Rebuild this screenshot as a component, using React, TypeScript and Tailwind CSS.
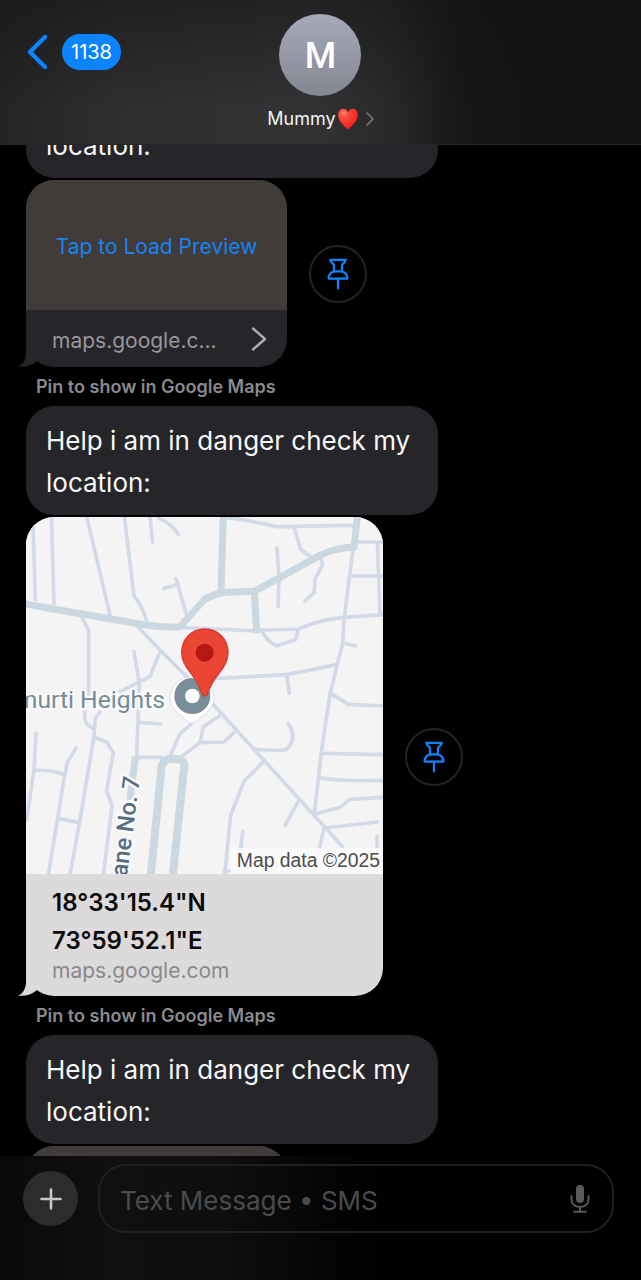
import { useLayoutEffect, useRef } from "react";

function TextBubble({ children }: { children: string }) {
  return (
    <p className="w-[412px] max-w-full rounded-[28px] bg-[#262529] pt-[14px] pr-4 pb-[11px] pl-5 text-[26px] leading-[42px] text-[#f7f7f8]">
      {children}
    </p>
  );
}

function Tail({ className }: { className: string }) {
  return (
    <svg className={`absolute bottom-0 -left-2 h-7 w-8 ${className}`} viewBox="0 0 32 28" fill="currentColor" aria-hidden="true">
      <path d="M8 0V14C8 20 5 26 0 27.700C7 28.500 14 26.500 19 22L24 18V0Z" />
    </svg>
  );
}

function PinButton() {
  return (
    <button type="button" aria-label="Pin" className="flex size-[58px] shrink-0 items-center justify-center rounded-full border-2 border-[#232325] text-[#1283fa]">
      <svg className="h-8 w-6" viewBox="0 0 24 32" fill="none" stroke="currentColor" strokeWidth="2.2" strokeLinecap="round" strokeLinejoin="round">
        <path d="M4.200 1.800H19.800C19.400 4.400 16.600 5.600 16 7V13.400C19.600 14.400 21.400 17 21.400 20.600H2.600C2.600 17 4.400 14.400 8 13.400V7C7.400 5.600 4.600 4.400 4.200 1.800Z" />
        <path d="M8 13.400H16M12 20.600V30.400" />
      </svg>
    </button>
  );
}

function LoadPreviewCard() {
  return (
    <div className="flex items-center gap-[22px]">
      <div className="relative w-[261px]">
        <Tail className="text-[#262529]" />
        <div className="relative overflow-hidden rounded-[28px] bg-[#262529]">
          <button type="button" className="flex h-[130px] w-full items-center justify-center bg-[#413c39] pt-1 text-[21px] text-[#1683f3]">
            Tap to Load Preview
          </button>
          <a href="#maps" className="flex h-[57px] items-center justify-between pr-5 pl-[26px] text-[21px] text-[#98979c]">
            <span className="pt-1">maps.google.c...</span>
            <svg className="h-6 w-4" viewBox="0 0 16 24" fill="none" stroke="#adadb1" strokeWidth="2.4" strokeLinecap="round" strokeLinejoin="round" aria-hidden="true">
              <path d="M2 1.500L14 12L2 22.500" />
            </svg>
          </a>
        </div>
      </div>
      <PinButton />
    </div>
  );
}

function MapDrawing() {
  return (
    <svg className="block w-full" viewBox="18 21 1071 1071" role="img" aria-label="Map">
      <rect x="18" y="21" width="1071" height="1071" fill="#f5f4f5" />
      <g fill="none" stroke="#d2dae7" strokeWidth="11" strokeLinecap="round" strokeLinejoin="round">
        <path d="M38 10L46 268M94 10L102 282M200 20L270 315M313 20L342 258C360 280 374 306 380 335M390 20L398 96M415 24Q458 42 475 74M432 235L470 224M468 206L500 315" />
        <path d="M615 22C690 30 740 44 772 50L1000 46M822 50L842 118L874 142M771 114L777 202L774 290M904 150L908 164L886 205L882 248L855 273M1005 96H1089M1072 96L1080 315M990 198H1089" />
        <path d="M1000 110L972 330L968 400L950 470L928 565L905 720L883 910M490 353L690 362L835 357Q900 328 972 322L1089 314" />
        <path d="M725 360Q740 395 770 407L826 390L835 360M972 400L1006 408M580 506L800 494L950 464M800 496L808 550" />
        <path d="M186 322L206 360V560M355 352L420 420L540 540L968 1010M420 424L390 500L300 545M342 424L358 520L350 740" />
        <path d="M928 548L985 583L1089 588M904 730L1089 734M898 803C950 812 1000 812 1089 812M1089 862L990 868L960 892L893 910L883 918M912 954L1072 936M912 954L895 1030M1071 978V1012" />
        <path d="M240 606L226 625L222 680L180 930L150 1095M196 590C190 630 195 645 218 654M226 683L260 696L280 728L260 842L276 888L262 1000L250 1095" />
        <path d="M168 714L142 756L133 800L112 930L85 1095M48 670L42 780L20 930M42 780L95 783L133 793M116 926L178 938" />
        <path d="M355 637L422 642M350 742H425M515 640L478 674L450 740M485 740L540 698L612 696L645 664M540 698L550 650L598 618" />
        <path d="M804 640Q834 684 800 718C770 724 740 720 702 718M727 758L672 814L632 915L614 1095M836 872L796 945M668 964L662 1020M614 1083H635" />
      </g>
      <g fill="none" stroke="#ccd8df" strokeWidth="21" strokeLinejoin="round">
        <path d="M8 280L100 297L360 342Q430 354 480 350L555 267Q590 250 620 247L703 244L900 136Q950 112 1002 112L1013 10" />
        <path d="M610 10L603 247M703 244L710 370" />
        <path d="M346 740L330 870" />
        <path strokeWidth="24" d="M392 1100L425 770Q430 746 456 746Q492 746 493 765L458 1100" />
      </g>
      <g fontFamily="Roboto, sans-serif" fontWeight="500" stroke="#fafafb" strokeLinejoin="round" paintOrder="stroke">
        <text x="435" y="593" textAnchor="end" fontSize="74" fontWeight="400" fill="#768b98" strokeWidth="14">murti Heights</text>
        <text transform="translate(360 802) rotate(-82.5)" textAnchor="end" fontSize="71" fill="#586d83" strokeWidth="14">Lane No. 7</text>
      </g>
      <path d="M516 500C480 500 450 528 450 564C450 598 486 618 505 636Q516 644 527 636C546 618 582 598 582 564C582 528 552 500 516 500Z" fill="#fff" stroke="#dddee1" strokeWidth="3" />
      <circle cx="517" cy="558" r="54" fill="#788f9b" />
      <circle cx="517" cy="558" r="22" fill="#fff" />
      <path d="M554 357C515 357 485 388 485 428C485 452 498 472 513 490C530 510 540 535 547 554Q554 562 561 554C568 535 580 510 597 490C612 472 624 452 624 428C624 388 594 357 554 357Z" fill="#ea4535" stroke="#d33b2e" strokeWidth="4" />
      <circle cx="554" cy="428" r="27" fill="#b51814" />
      <rect x="632" y="1014" width="457" height="78" fill="#fbfafb" fillOpacity=".85" />
      <text x="1080" y="1070" textAnchor="end" fontFamily="Liberation Sans, sans-serif" fontSize="58" fill="#4c4c4d">Map data ©2025</text>
    </svg>
  );
}

function MapCard() {
  return (
    <div className="flex items-center gap-[22px]">
      <div className="relative w-[357px]">
        <Tail className="text-[#dcdadb]" />
        <div className="relative overflow-hidden rounded-[28px] bg-[#dcdadb]">
          <MapDrawing />
          <div className="flex h-[122px] flex-col pt-[10px] pl-[26px]">
            <h2 className="text-2xl leading-[38px] font-semibold text-[#0b0b0c]">
              18°33'15.4"N
              <br />
              73°59'52.1"E
            </h2>
            <a href="#maps" className="text-[21px] leading-[22px] text-[#8a898c]">maps.google.com</a>
          </div>
        </div>
      </div>
      <PinButton />
    </div>
  );
}

function Caption() {
  return <p className="pl-[10px] text-lg leading-[39px] font-semibold text-[#8b8a8f]">Pin to show in Google Maps</p>;
}

export default function App() {
  const scroller = useRef<HTMLElement>(null);
  // The conversation opens part-way through its first message.
  useLayoutEffect(() => {
    if (scroller.current) scroller.current.scrollTop = 34;
  }, []);

  return (
    <div className="flex h-screen flex-col bg-black font-[Inter,'Liberation_Sans',sans-serif]">
      <header className="grid shrink-0 grid-cols-[1fr_auto_1fr] items-start border-b border-[#262627] bg-[linear-gradient(to_bottom,rgba(18,18,19,0.5),transparent_75%),linear-gradient(to_right,#242425,#2e2e30_18%,#333335_48%,#2a2a2b_60%,#171717_72%,#131313_85%)] px-[27px] pt-[14px] pb-3">
        <button type="button" className="mt-5 flex items-center gap-[14px]">
          <svg className="h-9 w-[21px]" viewBox="0 0 21 36" fill="none" stroke="#0a84ff" strokeWidth="4.4" strokeLinecap="round" strokeLinejoin="round" aria-hidden="true">
            <path d="M18 3L3 18L18 33" />
          </svg>
          <span className="rounded-[18px] bg-[#0a84ff] px-[9px] text-xl leading-9 text-white">1138</span>
        </button>
        <button type="button" className="flex flex-col items-center gap-[10px]">
          <span className="flex size-[82px] items-center justify-center rounded-full bg-linear-to-b from-[#a6a9b9] to-[#858791] pt-0.5 font-[Roboto,sans-serif] text-4xl font-medium text-white">M</span>
          <span className="flex items-center text-lg leading-[26px] text-[#f2f2f3]">
            Mummy
            <svg className="ml-0.5 h-[22px] w-5" viewBox="0 0 20 22" role="img" aria-label="Red heart">
              <defs>
                <radialGradient id="heart" cx=".28" cy=".22" r=".85">
                  <stop offset="0" stopColor="#ff8a78" />
                  <stop offset=".25" stopColor="#fb4a3c" />
                  <stop offset="1" stopColor="#ee1d12" />
                </radialGradient>
              </defs>
              <path d="M10 4.200C8.800 1.800 7.200.8 5.200.8C2.200.8.2 3.400.2 7C.2 12.800 5 17 10 21.600C15 17 19.800 12.800 19.800 7C19.800 3.400 17.800.8 14.800.8C12.800.8 11.200 1.800 10 4.200Z" fill="url(#heart)" />
            </svg>
            <svg className="ml-2 h-4 w-2" viewBox="0 0 8 16" fill="none" stroke="#77777a" strokeWidth="1.6" strokeLinecap="round" strokeLinejoin="round" aria-hidden="true">
              <path d="M1 2L7 8L1 14" />
            </svg>
          </span>
        </button>
      </header>

      <main ref={scroller} className="min-h-0 flex-1 overflow-y-auto pr-[27px] pl-[26px] [scrollbar-width:none]">
        <div className="flex flex-col gap-0.5">
          <TextBubble>location:</TextBubble>
          <LoadPreviewCard />
        </div>
        <Caption />
        <div className="flex flex-col gap-0.5">
          <TextBubble>Help i am in danger check my location:</TextBubble>
          <MapCard />
        </div>
        <Caption />
        <div className="flex flex-col gap-0.5">
          <TextBubble>Help i am in danger check my location:</TextBubble>
          <LoadPreviewCard />
        </div>
      </main>

      <footer className="flex shrink-0 items-center gap-5 bg-[linear-gradient(to_right,#090909,#101011_18%,#0e0e0f_35%,#020204_55%,#000_65%)] pt-2 pr-[27px] pb-[47px] pl-[23px]">
        <button type="button" aria-label="Add" className="flex size-[55px] shrink-0 items-center justify-center rounded-full bg-[#2c2c2e]">
          <svg className="size-6" viewBox="0 0 24 24" stroke="#c6c6c8" strokeWidth="2.6" strokeLinecap="round" aria-hidden="true">
            <path d="M12 2.500V21.500M2.500 12H21.500" />
          </svg>
        </button>
        <div className="flex h-[69px] min-w-0 flex-1 items-center rounded-[28px] border-2 border-[#202021] pr-[22px] pl-5">
          <input
            type="text"
            aria-label="Text message"
            placeholder="Text Message • SMS"
            className="min-w-0 flex-1 bg-transparent pt-1 text-[26px] text-white outline-none placeholder:text-[#4b4b4d]"
          />
          <button type="button" aria-label="Dictate" className="text-[#5a5a5c]">
            <svg className="h-7 w-5" viewBox="0 0 20 28" fill="none" stroke="currentColor" strokeWidth="2" strokeLinecap="round">
              <rect x="6" y="0" width="8" height="18" rx="4" fill="currentColor" stroke="none" />
              <path d="M1.500 11V14C1.500 19 5 22 10 22S18.500 19 18.500 14V11M10 22V26.500M4 26.700H16" />
            </svg>
          </button>
        </div>
      </footer>
    </div>
  );
}
